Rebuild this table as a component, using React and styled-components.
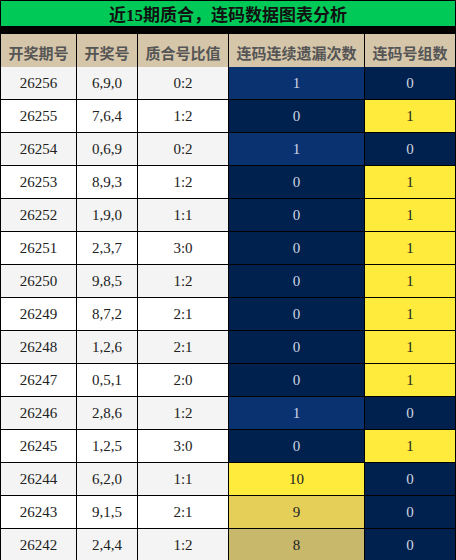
import React from "react";
import styled, { createGlobalStyle } from "styled-components";

const Global = createGlobalStyle`
  html, body { margin: 0; padding: 0; background: #fff; }
`;

const Table = styled.div`
  width: 456px;
  box-sizing: border-box;
  display: grid;
  grid-template-columns: 75px 60px 90px 135px 90px;
  grid-auto-rows: 32px;
  gap: 1px;
  padding: 1px;
  background: #000;
  font-family: "Liberation Serif", "Noto Sans CJK SC", serif;
`;

const Title = styled.div`
  grid-column: 1 / -1;
  height: 25px;
  margin-bottom: 1px;
  background: #00c957;
  color: #111;
  font-family: "Liberation Serif", "Noto Sans CJK SC", serif;
  font-weight: bold;
  font-size: 17px;
  display: flex;
  align-items: center;
  justify-content: center;
`;

const Head = styled.div`
  height: 36px;
  background: #d6c6a9;
  color: #555;
  font-family: "Noto Sans CJK SC", sans-serif;
  font-weight: bold;
  font-size: 15px;
  display: flex;
  align-items: center;
  justify-content: center;
`;

const Cell = styled.div`
  background: ${(p) => p.$bg};
  color: ${(p) => p.$fg || "#222"};
  font-size: 15px;
  display: flex;
  align-items: center;
  justify-content: center;
`;

const NAVY = "#00214d";
const BLUE = "#0b3270";
const LIGHT = "#cfd6e4";
const streakColor = { 0: NAVY, 1: BLUE, 10: "#ffeb3b", 9: "#e6cf58", 8: "#c8b86b" };

const rows = [
  ["26256", "6,9,0", "0:2", 1, 0],
  ["26255", "7,6,4", "1:2", 0, 1],
  ["26254", "0,6,9", "0:2", 1, 0],
  ["26253", "8,9,3", "1:2", 0, 1],
  ["26252", "1,9,0", "1:1", 0, 1],
  ["26251", "2,3,7", "3:0", 0, 1],
  ["26250", "9,8,5", "1:2", 0, 1],
  ["26249", "8,7,2", "2:1", 0, 1],
  ["26248", "1,2,6", "2:1", 0, 1],
  ["26247", "0,5,1", "2:0", 0, 1],
  ["26246", "2,8,6", "1:2", 1, 0],
  ["26245", "1,2,5", "3:0", 0, 1],
  ["26244", "6,2,0", "1:1", 10, 0],
  ["26243", "9,1,5", "2:1", 9, 0],
  ["26242", "2,4,4", "1:2", 8, 0],
];

const headers = ["开奖期号", "开奖号", "质合号比值", "连码连续遗漏次数", "连码号组数"];

export default function App() {
  return (
    <>
      <Global />
      <Table>
        <Title>近15期质合，连码数据图表分析</Title>
        {headers.map((h) => (
          <Head key={h}>{h}</Head>
        ))}
        {rows.map((r, i) => {
          const bg = i % 2 === 0 ? "#f4f4f4" : "#ffffff";
          const sBg = streakColor[r[3]];
          const sFg = r[3] <= 1 ? LIGHT : "#222";
          const gBg = r[4] === 1 ? "#ffeb3b" : NAVY;
          const gFg = r[4] === 1 ? "#222" : LIGHT;
          return (
            <React.Fragment key={r[0]}>
              <Cell $bg={bg}>{r[0]}</Cell>
              <Cell $bg={bg}>{r[1]}</Cell>
              <Cell $bg={bg}>{r[2]}</Cell>
              <Cell $bg={sBg} $fg={sFg}>{r[3]}</Cell>
              <Cell $bg={gBg} $fg={gFg}>{r[4]}</Cell>
            </React.Fragment>
          );
        })}
      </Table>
    </>
  );
}
